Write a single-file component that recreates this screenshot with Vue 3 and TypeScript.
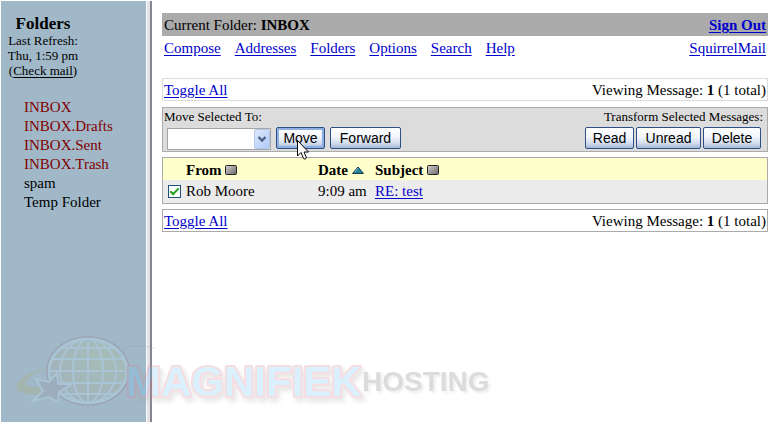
<script setup lang="ts">
import { ref } from 'vue'

interface Folder {
  name: string
  special: boolean
}

interface Message {
  id: number
  from: string
  date: string
  subject: string
}

const folders: Folder[] = [
  { name: 'INBOX', special: true },
  { name: 'INBOX.Drafts', special: true },
  { name: 'INBOX.Sent', special: true },
  { name: 'INBOX.Trash', special: true },
  { name: 'spam', special: false },
  { name: 'Temp Folder', special: false },
]

const menu: string[] = ['Compose', 'Addresses', 'Folders', 'Options', 'Search', 'Help']

const messages: Message[] = [{ id: 1, from: 'Rob Moore', date: '9:09 am', subject: 'RE: test' }]

const selected = ref<number[]>([1])
const target = ref('')

function toggleAll(): void {
  selected.value = selected.value.length ? [] : messages.map((m) => m.id)
}
</script>

<template>
  <div class="page">
    <aside class="sidebar">
      <div class="refresh">
        <h1>Folders</h1>
        <p>Last Refresh:</p>
        <p>Thu, 1:59 pm</p>
        <p>(<a href="#">Check mail</a>)</p>
      </div>
      <nav class="folders" aria-label="Mail folders">
        <a v-for="f in folders" :key="f.name" href="#" :class="{ special: f.special }">{{ f.name }}</a>
      </nav>
    </aside>
    <div class="divider"></div>

    <main class="main">
      <header class="bar current">
        <span>Current Folder: <b>INBOX</b></span>
        <a href="#"><b>Sign Out</b></a>
      </header>
      <nav class="bar menu" aria-label="Main menu">
        <span class="links">
          <a v-for="item in menu" :key="item" href="#">{{ item }}</a>
        </span>
        <a href="#">SquirrelMail</a>
      </nav>

      <div class="bar pager light">
        <a href="#" @click.prevent="toggleAll">Toggle All</a>
        <span>Viewing Message: <b>1</b> (1 total)</span>
      </div>

      <section class="actions">
        <div class="group">
          <label for="target">Move Selected To:</label>
          <div class="controls move">
            <span class="picker">
              <select id="target" v-model="target">
                <option value=""></option>
                <option v-for="f in folders" :key="f.name" :value="f.name">{{ f.name }}</option>
              </select>
              <svg class="arrow" viewBox="0 0 16 20" aria-hidden="true">
                <defs>
                  <linearGradient id="arrow-bg" x1="0" y1="0" x2="1" y2="1">
                    <stop offset="0" stop-color="#e1eafe" />
                    <stop offset="1" stop-color="#aec8f7" />
                  </linearGradient>
                </defs>
                <rect x="0.5" y="0.5" width="15" height="19" rx="1.5" fill="url(#arrow-bg)" stroke="#b4c8ec" />
                <path d="M4.5 8 L8 11.5 L11.5 8" fill="none" stroke="#4d6185" stroke-width="2.4" />
              </svg>
            </span>
            <span class="pointed">
              <button type="button" class="focused move-button">Move</button>
              <svg class="cursor" viewBox="0 0 12 20" aria-hidden="true">
                <path d="M0.5 0.5 V16 L4 12.5 L6.5 18.5 Q8 20 9.5 18 L7 12 H11.5 Z" fill="#fff" stroke="#000" />
              </svg>
            </span>
            <button type="button" class="forward">Forward</button>
          </div>
        </div>
        <div class="group right">
          <span class="caption">Transform Selected Messages:</span>
          <div class="controls">
            <button type="button" class="read">Read</button>
            <button type="button" class="unread">Unread</button>
            <button type="button" class="delete">Delete</button>
          </div>
        </div>
      </section>

      <table class="messages">
        <colgroup>
          <col class="c-check" />
          <col class="c-from" />
          <col class="c-date" />
          <col />
        </colgroup>
        <thead>
          <tr>
            <td></td>
            <th scope="col">
              From
              <svg class="sort" viewBox="0 0 12 10" aria-hidden="true">
                <defs>
                  <linearGradient id="sort-bg" x1="0" y1="0" x2="1" y2="1">
                    <stop offset="0" stop-color="#d4d2d2" />
                    <stop offset="1" stop-color="#686666" />
                  </linearGradient>
                </defs>
                <rect x="0.5" y="0.5" width="11" height="9" rx="1" fill="url(#sort-bg)" stroke="#222" />
              </svg>
            </th>
            <th scope="col">
              Date
              <svg class="sort" viewBox="0 0 12 10" aria-hidden="true">
                <path d="M6 2 L11.5 8.5 H0.5 Z" fill="#258097" stroke="#123c4c" />
                <path d="M6 3 L3 7" stroke="#79bfd0" />
              </svg>
            </th>
            <th scope="col">
              Subject
              <svg class="sort" viewBox="0 0 12 10" aria-hidden="true">
                <rect x="0.5" y="0.5" width="11" height="9" rx="1" fill="url(#sort-bg)" stroke="#222" />
              </svg>
            </th>
          </tr>
        </thead>
        <tbody>
          <tr v-for="m in messages" :key="m.id">
            <td class="check">
              <input :id="`pick-${m.id}`" v-model="selected" type="checkbox" :value="m.id" />
            </td>
            <td><label :for="`pick-${m.id}`">{{ m.from }}</label></td>
            <td>{{ m.date }}</td>
            <td><a href="#">{{ m.subject }}</a></td>
          </tr>
        </tbody>
      </table>

      <div class="bar pager">
        <a href="#" @click.prevent="toggleAll">Toggle All</a>
        <span>Viewing Message: <b>1</b> (1 total)</span>
      </div>
    </main>

    <svg class="watermark" viewBox="0 0 490 86" aria-hidden="true">
      <defs>
        <radialGradient id="globe-bg" cx="0.7" cy="0.3" r="0.8">
          <stop offset="0" stop-color="#b8cc88" />
          <stop offset="1" stop-color="#a8a49c" />
        </radialGradient>
      </defs>
      <g class="ink">
        <path d="M36 32 C18 35 2 45 6 54 Q12 60 32 58 L32 51 Q16 52 15 48 C15 42 26 36 36 32Z" fill="#b0b070" />
        <ellipse cx="77" cy="35" rx="42" ry="35" fill="#906878" />
        <ellipse cx="77" cy="35" rx="39" ry="32" fill="url(#globe-bg)" stroke="#c4e6fa" stroke-width="3" />
        <g fill="none" stroke="#c4e6fa" stroke-width="2">
          <path d="M77 3 V67 M38 35 H116 M42 23 H112 M52 12 H102 M42 47 H112 M52 58 H102" />
          <ellipse cx="77" cy="35" rx="15" ry="32" />
          <ellipse cx="77" cy="35" rx="28" ry="32" />
        </g>
        <path
          d="M25 43 L38 46 L46 37 L47 48 L61 48 L48 56 L47 66 L38 61 L22 65 L32 55 Z"
          fill="#91919a"
          stroke="#c4e6fa"
          stroke-width="2"
        />
        <path d="M112 12 Q126 8 144 12" fill="none" stroke="#a08890" />
        <text class="brand" x="115" y="60">MAGNIFIEK</text>
      </g>
      <text class="host" x="351" y="55">HOSTING</text>
    </svg>
  </div>
</template>

<style>
body {
  margin: 0;
  background: #fff;
}
</style>

<style scoped>
.page {
  position: relative;
  display: flex;
  box-sizing: border-box;
  min-height: 100vh;
  padding: 1px 8px 0 1px;
  overflow: hidden;
  color: #000;
  font-family: 'Liberation Serif', 'Times New Roman', serif;
  font-size: 15px;
  line-height: 19px;
}

a {
  color: #0000cc;
  text-underline-offset: 2px;
}

.sidebar {
  flex: none;
  box-sizing: border-box;
  width: 145px;
  padding-top: 13px;
  background: #a0b8c8;
}

.refresh {
  width: 84px;
  font-size: 13px;
  line-height: 15px;
  text-align: center;
}

.refresh h1 {
  margin: 0;
  font-size: 17px;
  line-height: 19px;
}

.refresh p {
  margin: 0;
}

.refresh a {
  color: #000;
}

.folders {
  display: flex;
  flex-direction: column;
  align-items: flex-start;
  padding: 20px 0 0 23px;
}

.folders a {
  color: #000;
  text-decoration: none;
}

.folders a.special {
  color: #800000;
}

.divider {
  flex: none;
  box-sizing: border-box;
  width: 6px;
  border-left: 1px solid #fff;
  border-right: 2px solid #85858c;
  background: #e3e0ea;
}

.main {
  flex: 1;
  min-width: 0;
  padding: 12px 0 0 10px;
}

.bar {
  display: flex;
  justify-content: space-between;
  padding: 3px 2px 1px;
}

.current {
  background: #ababab;
}

.menu {
  margin-bottom: 19px;
}

.links {
  display: flex;
  gap: 14px;
}

.pager {
  padding: 2px 1px 0;
  border: 1px solid #ababab;
}

.pager.light {
  border-color: #dcdcdc;
}

.actions {
  display: flex;
  justify-content: space-between;
  margin: 6px 0 5px;
  padding: 1px;
  border: 1px solid #ababab;
  background: #dcdcdc;
  font-size: 13px;
  line-height: 15px;
}

.group {
  display: flex;
  flex-direction: column;
  gap: 3px;
}

.group.right {
  align-items: flex-end;
  padding-right: 3px;
}

.right .controls {
  padding-right: 2px;
}

.controls {
  display: flex;
  gap: 2px;
  height: 23px;
}

.controls.move {
  gap: 5px;
  padding-left: 3px;
}

button {
  box-sizing: border-box;
  height: 22px;
  padding: 0;
  border: 1px solid #2d4f85;
  border-radius: 2px;
  background: linear-gradient(#fff, #f2f5fa 45%, #d3deed 75%, #a5b8d4);
  color: #000;
  font-family: 'Liberation Sans', Arial, sans-serif;
  font-size: 14px;
  line-height: 18px;
}

button.focused {
  box-shadow: inset 0 0 0 2px #8eaee0;
}

.move-button,
.read {
  width: 49px;
}

.forward {
  width: 71px;
}

.unread {
  width: 65px;
}

.delete {
  width: 58px;
}

.picker,
.pointed {
  position: relative;
  display: flex;
}

select {
  box-sizing: border-box;
  width: 104px;
  height: 22px;
  margin-top: 1px;
  border: 1px solid #a5a5a5;
  border-radius: 0;
  background: #fff;
  appearance: none;
}

.arrow {
  position: absolute;
  top: 2px;
  right: 1px;
  width: 16px;
  height: 20px;
  pointer-events: none;
}

.cursor {
  position: absolute;
  z-index: 1;
  top: 13px;
  left: 21px;
  width: 12px;
  height: 20px;
  pointer-events: none;
}

.messages {
  width: 100%;
  margin-bottom: 5px;
  border: 1px solid #ababab;
  border-spacing: 0;
  table-layout: fixed;
}

.messages th,
.messages td {
  height: 19px;
  padding: 2px 0;
  text-align: left;
  white-space: nowrap;
}

.messages thead th,
.messages thead td {
  padding: 3px 0 0;
}

.messages thead {
  background: #ffffcc;
}

.messages tbody {
  background: #ececec;
}

.c-check {
  width: 23px;
}

.c-from {
  width: 132px;
}

.c-date {
  width: 57px;
}

.sort {
  width: 12px;
  height: 10px;
}

.messages .check {
  padding-left: 5px;
}

input[type='checkbox'] {
  display: block;
  box-sizing: border-box;
  width: 13px;
  height: 13px;
  margin: 0;
  border: 1px solid #1c5180;
  background: #fff;
  appearance: none;
}

input[type='checkbox']:checked::before {
  content: '';
  display: block;
  box-sizing: border-box;
  width: 9px;
  height: 5px;
  margin: 2px 0 0 1px;
  border: solid #21a121;
  border-width: 0 0 2px 2px;
  transform: rotate(-45deg);
}

.watermark {
  position: absolute;
  top: 336px;
  left: 11px;
  width: 490px;
  height: 86px;
  pointer-events: none;
}

.ink {
  opacity: 0.26;
}

.brand {
  fill: #78c8fa;
  stroke: #e08090;
  stroke-width: 4px;
  stroke-linejoin: round;
  paint-order: stroke;
  filter: drop-shadow(3px 4px 2px #aaa);
  font-family: 'Liberation Sans', Arial, sans-serif;
  font-size: 42px;
  font-weight: bold;
}

.host {
  fill: #dcdcdc;
  filter: drop-shadow(2px 2px 1px #eee);
  font-family: 'Liberation Sans', Arial, sans-serif;
  font-size: 28px;
  font-weight: bold;
}
</style>
